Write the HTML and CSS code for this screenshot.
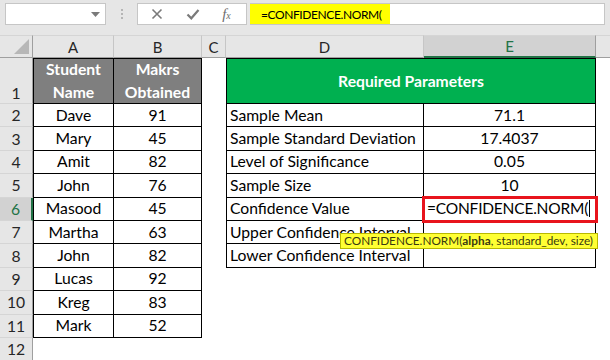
FILE: index.html
```html
<!DOCTYPE html>
<html lang="en">

<head>
    <meta charset="UTF-8">
    <title>CONFIDENCE.NORM</title>
    <link rel="stylesheet" href="styles.css">
</head>

<body>

    <div class="toolbar">
        <div class="name-box">
            <svg class="caret" width="9" height="5" viewBox="0 0 9 5"><path d="M0 0h9L4.5 5z" fill="#7a7a7a"/></svg>
        </div>
        <div class="grip"><i></i><i></i><i></i></div>
        <div class="fx-buttons">
            <svg width="12" height="12" viewBox="0 0 12 12"><path d="M1.5 1.5l9 9M10.5 1.5l-9 9" stroke="#7a7a7a" stroke-width="1.6"/></svg>
            <svg width="14" height="12" viewBox="0 0 14 12"><path d="M1.5 6.5l3.8 3.8L12.5 2" fill="none" stroke="#7a7a7a" stroke-width="2.2"/></svg>
            <span class="fx">f<sub>x</sub></span>
        </div>
        <div class="formula">
            <span class="formula-text">=CONFIDENCE.NORM(</span>
        </div>
    </div>

    <div class="sheet">
        <!-- column headers -->
        <div class="corner"><svg width="15" height="15" viewBox="0 0 15 15"><path d="M15 0V15H0z" fill="#b7b7b7"/></svg></div>
        <div class="col-head">A</div>
        <div class="col-head">B</div>
        <div class="col-head">C</div>
        <div class="col-head">D</div>
        <div class="col-head active">E</div>
        <div class="col-head end"></div>

        <!-- row 1 -->
        <div class="row-head tall">1</div>
        <div class="cell b bl bt gray">Student<br>Name</div>
        <div class="cell b bt gray">Makrs<br>Obtained</div>
        <div class="cell"></div>
        <div class="cell b bl bt green span2">Required Parameters</div>
        <div class="cell"></div>

        <div class="row-head">2</div>
        <div class="cell b bl">Dave</div>
        <div class="cell b">91</div>
        <div class="cell"></div>
        <div class="cell b bl left">Sample Mean</div>
        <div class="cell b">71.1</div>
        <div class="cell"></div>

        <div class="row-head">3</div>
        <div class="cell b bl">Mary</div>
        <div class="cell b">45</div>
        <div class="cell"></div>
        <div class="cell b bl left">Sample Standard Deviation</div>
        <div class="cell b">17.4037</div>
        <div class="cell"></div>

        <div class="row-head">4</div>
        <div class="cell b bl">Amit</div>
        <div class="cell b">82</div>
        <div class="cell"></div>
        <div class="cell b bl left">Level of Significance</div>
        <div class="cell b">0.05</div>
        <div class="cell"></div>

        <div class="row-head">5</div>
        <div class="cell b bl">John</div>
        <div class="cell b">76</div>
        <div class="cell"></div>
        <div class="cell b bl left">Sample Size</div>
        <div class="cell b">10</div>
        <div class="cell"></div>

        <div class="row-head active">6</div>
        <div class="cell b bl">Masood</div>
        <div class="cell b">45</div>
        <div class="cell"></div>
        <div class="cell b bl left">Confidence Value</div>
        <div class="cell b left editing">=CONFIDENCE.NORM(<span class="cursor"></span></div>
        <div class="cell"></div>

        <div class="row-head">7</div>
        <div class="cell b bl">Martha</div>
        <div class="cell b">63</div>
        <div class="cell"></div>
        <div class="cell b bl left">Upper Confidence Interval</div>
        <div class="cell b"></div>
        <div class="cell"></div>

        <div class="row-head">8</div>
        <div class="cell b bl">John</div>
        <div class="cell b">82</div>
        <div class="cell"></div>
        <div class="cell b bl left">Lower Confidence Interval</div>
        <div class="cell b"></div>
        <div class="cell"></div>

        <div class="row-head">9</div>
        <div class="cell b bl">Lucas</div>
        <div class="cell b">92</div>
        <div class="cell"></div>
        <div class="cell"></div>
        <div class="cell"></div>
        <div class="cell"></div>

        <div class="row-head">10</div>
        <div class="cell b bl">Kreg</div>
        <div class="cell b">83</div>
        <div class="cell"></div>
        <div class="cell"></div>
        <div class="cell"></div>
        <div class="cell"></div>

        <div class="row-head">11</div>
        <div class="cell b bl">Mark</div>
        <div class="cell b">52</div>
        <div class="cell"></div>
        <div class="cell"></div>
        <div class="cell"></div>
        <div class="cell"></div>

        <div class="row-head">12</div>
        <div class="cell"></div>
        <div class="cell"></div>
        <div class="cell"></div>
        <div class="cell"></div>
        <div class="cell"></div>
        <div class="cell"></div>

        <div class="tooltip">CONFIDENCE.NORM(<b>alpha</b>, standard_dev, size)</div>
    </div>

</body>

</html>
```

FILE: styles.css
```css
body {
    margin: 0;
    background-color: #fff;
    font-family: Lato, "Liberation Sans", sans-serif;
    color: #000;
    width: 610px;
    height: 360px;
    overflow: hidden;
}

/* formula bar */
.toolbar {
    display: flex;
    align-items: flex-start;
    height: 35px;
    padding: 3px 5px 0 5px;
    box-sizing: border-box;
    background-color: #e6e6e6;
}

.name-box {
    width: 101px;
    height: 22px;
    box-sizing: border-box;
    background-color: #fff;
    border: 1px solid #c6c6c6;
    display: flex;
    align-items: center;
    justify-content: flex-end;
    padding-right: 5px;
}

.grip {
    width: 31px;
    height: 22px;
    display: flex;
    flex-direction: column;
    align-items: center;
    justify-content: center;
    gap: 2px;
}

.grip i {
    width: 2px;
    height: 2px;
    background-color: #b5b5b5;
}

.fx-buttons {
    width: 110px;
    height: 22px;
    box-sizing: border-box;
    background-color: #fff;
    border: 1px solid #c6c6c6;
    display: flex;
    align-items: center;
    justify-content: space-around;
    padding: 0 4px 0 2px;
}

.fx {
    font-family: "Liberation Serif", serif;
    font-style: italic;
    font-size: 15px;
    color: #6e6e6e;
    line-height: 1;
}

.fx sub {
    font-size: 10px;
    vertical-align: 0;
}

.formula {
    flex: 1;
    height: 22px;
    margin-left: 3px;
    box-sizing: border-box;
    background-color: #fff;
    border: 1px solid #c6c6c6;
    border-left: none;
    display: flex;
}

.formula-text {
    width: 140px;
    background-color: #ffff00;
    padding-left: 11px;
    box-sizing: border-box;
    font-size: 12px;
    letter-spacing: -0.4px;
    line-height: 21px;
    white-space: nowrap;
}

/* grid */
.sheet {
    position: relative;
    display: grid;
    grid-template-columns: 33px 81px 88px 24px 198px 172px 1fr;
    grid-template-rows: 23px 46px repeat(11, 23.4px);
    font-size: 15.7px;
}

.corner,
.col-head {
    background-color: #e6e6e6;
    border-top: 1px solid #d5d5d5;
    border-bottom: 1px solid #9f9f9f;
    box-sizing: border-box;
}

.corner {
    display: flex;
    align-items: flex-end;
    justify-content: flex-end;
    padding: 0 3px 3px 0;
    border-right: 1px solid #9f9f9f;
}

.col-head {
    display: flex;
    align-items: center;
    justify-content: center;
    border-right: 1px solid #c6c6c6;
    color: #262626;
    font-size: 15px;
}

.col-head.active {
    background-color: #d2d2d2;
    border-bottom: 2px solid #217346;
    color: #217346;
    border-right-color: #9f9f9f;
}

.col-head.end {
    border-right: none;
}

.row-head {
    background-color: #e6e6e6;
    border-right: 1px solid #9f9f9f;
    border-bottom: 1px solid #d5d5d5;
    box-sizing: border-box;
    display: flex;
    align-items: center;
    justify-content: center;
    color: #262626;
}

.row-head.tall {
    align-items: flex-end;
    padding-bottom: 1px;
}

.row-head.active {
    background-color: #d2d2d2;
    border-right: 2px solid #217346;
    color: #217346;
}

.cell {
    box-sizing: border-box;
    display: flex;
    align-items: center;
    justify-content: center;
    text-align: center;
    white-space: nowrap;
    line-height: 23px;
}

.cell.left {
    justify-content: flex-start;
    padding-left: 3px;
}

.b {
    border-right: 1px solid #000;
    border-bottom: 1px solid #000;
}

.bl {
    border-left: 1px solid #000;
}

.bt {
    border-top: 1px solid #000;
}

.gray {
    background-color: #7f7f7f;
    color: #fff;
    font-weight: bold;
}

.green {
    background-color: #00b050;
    color: #fff;
    font-weight: bold;
}

.span2 {
    grid-column: span 2;
}

.editing {
    padding-left: 0;
    font-size: 15.5px;
    letter-spacing: -0.2px;
    outline: 3px solid #e8141c;
    outline-offset: -1px;
    position: relative;
    z-index: 1;
}

.cursor {
    display: inline-block;
    width: 1px;
    height: 17px;
    background-color: #000;
    margin-left: 1px;
}

.tooltip {
    position: absolute;
    left: 340px;
    top: 198px;
    height: 14px;
    padding: 0 4px 0 3px;
    background-color: #ffff33;
    border: 1px solid #b8b800;
    font-size: 11.8px;
    line-height: 14px;
    color: #3a3a10;
    white-space: nowrap;
    z-index: 2;
}
```
